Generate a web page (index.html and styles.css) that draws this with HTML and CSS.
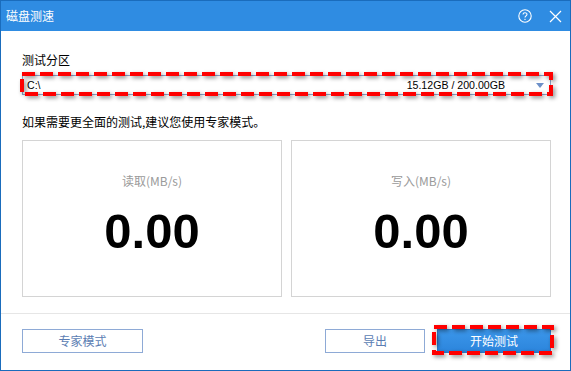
FILE: index.html
```html
<!DOCTYPE html>
<html lang="zh">
<head>
<meta charset="utf-8">
<title>磁盘测速</title>
<link rel="stylesheet" href="styles.css">
</head>
<body>
<div class="window">
  <div class="titlebar">
    <span class="title">磁盘测速</span>
    <div class="tools">
      <svg class="ico" width="14" height="14" viewBox="0 0 14 14">
        <circle cx="7" cy="7" r="6.2" fill="none" stroke="#fff" stroke-width="1.1"/>
        <path d="M5 5.4 C5 3.2 9 3.2 9 5.3 C9 6.8 7 6.9 7 8.6" fill="none" stroke="#fff" stroke-width="1.1"/>
        <rect x="6.45" y="9.8" width="1.1" height="1.2" fill="#fff"/>
      </svg>
      <svg class="ico close" width="13" height="13" viewBox="0 0 13 13">
        <path d="M1 1 L12 12 M12 1 L1 12" stroke="#fff" stroke-width="1.2" fill="none"/>
      </svg>
    </div>
  </div>
  <div class="content">
    <div class="label">测试分区</div>
    <div class="select">
      <span class="drive">C:\</span>
      <span class="size">15.12GB / 200.00GB</span>
      <svg class="arrow" width="8" height="5" viewBox="0 0 8 5"><path d="M0 0 H8 L4 5 Z" fill="#6d90c8"/></svg>
      <svg class="hl hl-select"><rect class="hl-rect"/></svg>
    </div>
    <div class="hint">如果需要更全面的测试,建议您使用专家模式。</div>
    <div class="panels">
      <div class="panel">
        <div class="cap">读取(MB/s)</div>
        <div class="num">0.00</div>
      </div>
      <div class="panel">
        <div class="cap">写入(MB/s)</div>
        <div class="num">0.00</div>
      </div>
    </div>
  </div>
  <div class="footer">
    <div class="btn btn-expert">专家模式</div>
    <div class="spacer"></div>
    <div class="btn btn-export">导出</div>
    <div class="btn btn-start">开始测试
      <svg class="hl hl-start"><rect class="hl-rect"/></svg>
    </div>
  </div>
</div>
</body>
</html>
```
FILE: styles.css
```css
* { box-sizing: border-box; }
html, body { margin: 0; padding: 0; background: #fff; }
body {
  font-family: "Noto Sans CJK SC", "Liberation Sans", sans-serif;
  font-size: 12px;
  color: #000;
}
.window {
  width: 571px;
  height: 371px;
  border: 1px solid #1a6cbc;
  display: flex;
  flex-direction: column;
  background: #fff;
}
.titlebar {
  height: 30px;
  background: #2f8ce2;
  display: flex;
  align-items: center;
  padding: 0 8px 0 5px;
  flex: none;
}
.title {
  color: #fff;
  font-size: 12px;
  line-height: 16px;
  flex: 1;
}
.tools {
  display: flex;
  align-items: center;
  gap: 17px;
}
.ico { display: block; }
.content {
  padding: 0 19px 0 21px;
  flex: none;
}
.label {
  margin-top: 21px;
  line-height: 16px;
  height: 16px;
}
.select {
  position: relative;
  margin-top: 7px;
  height: 20px;
  border: 1px solid #8aa3c8;
  display: flex;
  align-items: center;
  padding: 0 6px 0 4px;
  font-family: "Liberation Sans", "DejaVu Sans", sans-serif;
  font-size: 10.6px;
  background: #fff;
}
.drive { flex: 1; }
.size { margin-right: 31px; }
.arrow { display: block; margin-top: 1px; }
.hl {
  position: absolute;
  overflow: visible;
  pointer-events: none;
  filter: drop-shadow(2px 2px 2px rgba(0,0,0,0.45));
}
.hl-rect {
  x: 2px;
  y: 2px;
  width: calc(100% - 4px);
  height: calc(100% - 4px);
  fill: none;
  stroke: #ff0000;
  stroke-width: 4px;
  stroke-dasharray: 13 5;
}
.hl-select {
  left: -3px;
  top: -4px;
  width: calc(100% + 6px);
  height: calc(100% + 6px);
}
.hint {
  margin-top: 19px;
  line-height: 16px;
  height: 16px;
}
.panels {
  margin-top: 10px;
  display: flex;
  gap: 9px;
  height: 157px;
}
.panel {
  flex: 1;
  border: 1px solid #d4d4d4;
  display: flex;
  flex-direction: column;
  align-items: center;
  padding-top: 32px;
}
.cap {
  color: #9a9a9a;
  line-height: 16px;
  font-size: 12px;
}
.num {
  margin-top: 18px;
  font-family: "Liberation Sans", Arial, sans-serif;
  font-weight: bold;
  font-size: 49px;
  line-height: 49px;
  color: #000;
}
.footer {
  margin-top: 16px;
  border-top: 1px solid #e6e6e6;
  padding: 15px 19px 0 21px;
  display: flex;
  align-items: flex-start;
  flex: 1;
}
.spacer { flex: 1; }
.btn {
  height: 24px;
  border: 1px solid #8eaad6;
  color: #5b7db3;
  display: flex;
  align-items: center;
  justify-content: center;
  line-height: 16px;
  background: #fff;
}
.btn-expert { width: 121px; }
.btn-export { width: 100px; }
.btn-start {
  position: relative;
  width: 114px;
  margin-left: 12px;
  border: 1px solid #2a7fd4;
  background: linear-gradient(#3b96ea, #2c85dc);
  color: #fff;
}
.hl-start {
  left: -6px;
  top: -5px;
  width: calc(100% + 10px);
  height: calc(100% + 8px);
}
```
